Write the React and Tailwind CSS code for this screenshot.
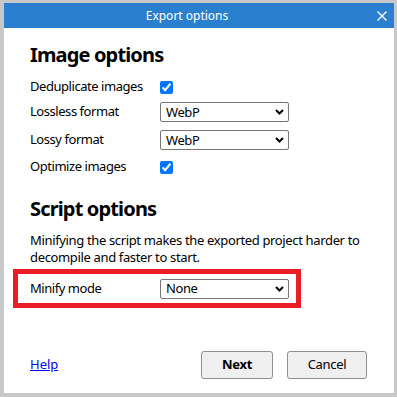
import React from 'react';

const font = { fontFamily: '"Noto Sans", "Open Sans", sans-serif' };

const Chevron = () => (
  <svg width="9" height="6" viewBox="0 0 9 6" className="shrink-0">
    <path d="M1 1 L4.5 4.5 L8 1" fill="none" stroke="#000" strokeWidth="2" />
  </svg>
);

const Select = ({ value }) => (
  <div className="w-[129px] h-[20px] border border-[#767676] rounded-[2px] bg-white flex items-center justify-between pl-[5px] pr-[4px]">
    <span className="text-[13px] leading-none tracking-[-0.4px]">{value}</span>
    <Chevron />
  </div>
);

const Check = () => (
  <input type="checkbox" defaultChecked className="w-[13px] h-[13px] m-0 accent-[#0075ff]" />
);

const Row = ({ label, children, className = '' }) => (
  <div className={`flex items-center h-[20px] ${className}`}>
    <span className="w-[130px] shrink-0 text-[13px] tracking-[-0.45px] text-black">{label}</span>
    {children}
  </div>
);

const App = () => {
  return (
    <div
      className="w-[397px] h-[397px] bg-[#c8c8c8] pt-[3px] pl-[4px] pr-[3px] pb-[4px] flex flex-col"
      style={font}
    >
      {/* Title bar */}
      <div className="h-[25px] bg-[#2b7fcf] flex items-center shrink-0">
        <div className="flex-1 text-center text-white text-[12px] leading-none">Export options</div>
        <div className="w-[24px] h-[25px] flex items-center justify-center">
          <svg width="10" height="10" viewBox="0 0 10 10">
            <path d="M0.5 0.5 L9.5 9.5 M9.5 0.5 L0.5 9.5" stroke="#fff" strokeWidth="1.4" />
          </svg>
        </div>
      </div>

      {/* Body */}
      <div className="flex-1 bg-white flex flex-col pl-[26px] pr-[27px] text-black">
        <h2 className="mt-[13px] text-[20px] leading-[27px] font-bold tracking-[-0.85px]">Image options</h2>

        <Row label="Deduplicate images" className="mt-[9px]"><Check /></Row>
        <Row label="Lossless format" className="mt-[5px]"><Select value="WebP" /></Row>
        <Row label="Lossy format" className="mt-[8px]"><Select value="WebP" /></Row>
        <Row label="Optimize images" className="mt-[7px]"><Check /></Row>

        <h2 className="mt-[18px] text-[20px] leading-[27px] font-bold tracking-[-0.85px]">Script options</h2>
        <p className="mt-[10px] text-[13px] leading-[17px] tracking-[-0.35px]">
          Minifying the script makes the exported project harder to decompile and faster to start.
        </p>

        <div className="mt-[3px] -ml-[17px] w-[288px] h-[39px] border-[5px] border-[#ec1c24] pl-[12px] flex items-center">
          <Row label="Minify mode"><Select value="None" /></Row>
        </div>

        {/* Footer */}
        <div className="mt-auto pb-[14px] flex items-center">
          <a href="#" className="text-[13px] text-[#0000ee] underline">Help</a>
          <div className="ml-auto flex gap-[14px]">
            <button className="w-[72px] h-[28px] bg-[#efefef] border border-[#8f8f8f] rounded-[3px] text-[13px] font-bold tracking-[-0.3px]">Next</button>
            <button className="w-[80px] h-[28px] bg-[#efefef] border border-[#8f8f8f] rounded-[3px] text-[13px] tracking-[-0.3px]">Cancel</button>
          </div>
        </div>
      </div>
    </div>
  );
};

export default App;
